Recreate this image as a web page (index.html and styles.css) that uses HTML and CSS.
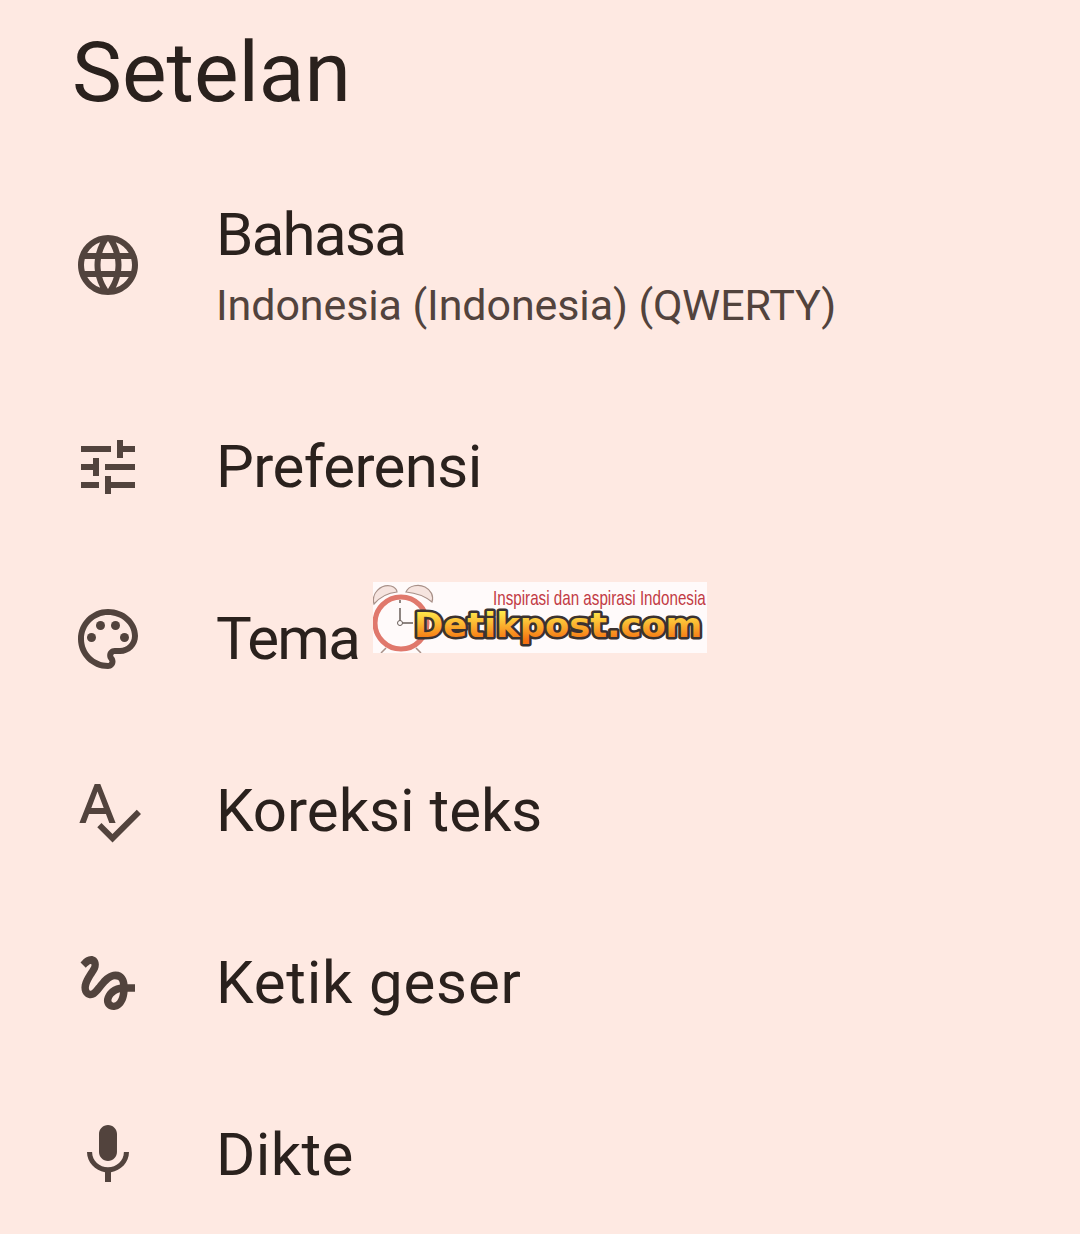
FILE: index.html
```html
<!DOCTYPE html>
<html>

<head>
    <meta charset="utf-8">
    <title>Setelan</title>
    <link rel="stylesheet" href="styles.css">
</head>

<body>
    <main class="page">
        <h1 class="title">Setelan</h1>
        <ul class="menu">
            <li class="row row-tall">
                <svg class="icon" viewBox="0 0 24 24"><path d="M11.99 2C6.47 2 2 6.48 2 12s4.47 10 9.99 10C17.52 22 22 17.52 22 12S17.52 2 11.99 2zm6.93 6h-2.95c-.32-1.25-.78-2.45-1.38-3.56 1.84.63 3.37 1.91 4.33 3.56zM12 4.04c.83 1.2 1.48 2.53 1.91 3.96h-3.82c.43-1.43 1.08-2.76 1.91-3.96zM4.26 14C4.1 13.36 4 12.69 4 12s.1-1.36.26-2h3.38c-.08.66-.14 1.32-.14 2 0 .68.06 1.34.14 2H4.26zm.82 2h2.95c.32 1.25.78 2.45 1.38 3.56-1.84-.63-3.37-1.9-4.33-3.56zm2.95-8H5.08c.96-1.66 2.49-2.93 4.33-3.56C8.81 5.55 8.35 6.75 8.03 8zM12 19.96c-.83-1.2-1.48-2.53-1.91-3.96h3.82c-.43 1.43-1.08 2.76-1.91 3.96zM14.34 14H9.66c-.09-.66-.16-1.32-.16-2 0-.68.07-1.35.16-2h4.68c.09.65.16 1.32.16 2 0 .68-.07 1.34-.16 2zm.25 5.56c.6-1.11 1.06-2.31 1.38-3.56h2.95c-.96 1.65-2.49 2.93-4.33 3.56zM16.36 14c.08-.66.14-1.32.14-2 0-.68-.06-1.34-.14-2h3.38c.16.64.26 1.31.26 2s-.1 1.36-.26 2h-3.38z"/></svg>
                <div class="labels">
                    <span class="label label-tight">Bahasa</span>
                    <span class="sublabel">Indonesia (Indonesia) (QWERTY)</span>
                </div>
            </li>
            <li class="row">
                <svg class="icon" viewBox="0 0 24 24"><path d="M3 17v2h6v-2H3zM3 5v2h10V5H3zm10 16v-2h8v-2h-8v-2h-2v6h2zM7 9v2H3v2h4v2h2V9H7zm14 4v-2H11v2h10zm-6-4h2V7h4V5h-4V3h-2v6z"/></svg>
                <span class="label label-snug">Preferensi</span>
            </li>
            <li class="row">
                <svg class="icon" viewBox="0 0 24 24">
                    <path d="M12 22C6.49 22 2 17.51 2 12S6.49 2 12 2s10 4.04 10 9c0 3.31-2.69 6-6 6h-1.77c-.28 0-.5.22-.5.5 0 .12.05.23.13.33.41.47.64 1.06.64 1.67 0 1.38-1.12 2.5-2.5 2.5zm0-18c-4.41 0-8 3.59-8 8s3.59 8 8 8c.28 0 .5-.22.5-.5 0-.16-.08-.28-.14-.35-.41-.46-.63-1.05-.63-1.65 0-1.38 1.12-2.5 2.5-2.5H16c2.21 0 4-1.79 4-4 0-3.86-3.59-7-8-7z"/>
                    <circle cx="6.5" cy="11.5" r="1.5"/>
                    <circle cx="9.5" cy="7.5" r="1.5"/>
                    <circle cx="14.5" cy="7.5" r="1.5"/>
                    <circle cx="17.5" cy="11.5" r="1.5"/>
                </svg>
                <span class="label label-tight">Tema</span>
            </li>
            <li class="row">
                <svg class="icon" viewBox="0 0 24 24"><path d="M12.45 16h2.09L9.43 3H7.57L2.46 16h2.09l1.12-3h5.64l1.14 3zm-6.02-5L8.5 5.48 10.57 11H6.43zm15.16.59l-8.09 8.09L9.83 16l-1.41 1.41 5.09 5.09L23 13l-1.41-1.41z"/></svg>
                <span class="label">Koreksi teks</span>
            </li>
            <li class="row">
                <svg class="icon" viewBox="0 0 24 24"><path d="M4.59 6.89c.7-.71 1.4-1.35 1.71-1.22.5.2 0 1.03-.3 1.52-.25.42-2.86 3.89-2.86 6.31 0 1.28.48 2.34 1.34 2.98.75.56 1.74.73 2.64.46 1.07-.31 1.95-1.4 3.06-2.77 1.21-1.49 2.83-3.44 4.08-3.44 1.63 0 1.65 1.01 1.76 1.79-3.78.64-5.38 3.67-5.38 5.37 0 1.7 1.44 3.09 3.21 3.09 1.63 0 4.29-1.33 4.69-6.1H21v-2.5h-2.47c-.15-1.65-1.09-4.2-4.03-4.2-2.25 0-4.18 1.91-4.94 2.84-.58.73-2.06 2.48-2.29 2.72-.25.3-.68.84-1.11.84-.45 0-.72-.83-.36-1.92.35-1.09 1.4-2.86 1.85-3.52.78-1.14 1.3-1.92 1.3-3.28C8.95 3.69 7.31 3 6.44 3 5.12 3 3.97 4 3.72 4.25c-.36.36-.66.66-.88.93l1.75 1.71zm9.29 11.66c-.31 0-.74-.26-.74-.72 0-.6.73-2.2 2.87-2.76-.3 2.69-1.43 3.48-2.13 3.48z"/></svg>
                <span class="label label-wide">Ketik geser</span>
            </li>
            <li class="row">
                <svg class="icon" viewBox="0 0 24 24"><path d="M12 14c1.66 0 2.99-1.34 2.99-3L15 5c0-1.66-1.34-3-3-3S9 3.34 9 5v6c0 1.66 1.34 3 3 3zm5.3-3c0 3-2.54 5.1-5.3 5.1S6.7 14 6.7 11H5c0 3.41 2.72 6.23 6 6.72V21h2v-3.28c3.28-.48 6-3.3 6-6.72h-1.7z"/></svg>
                <span class="label label-dikte">Dikte</span>
            </li>
        </ul>

        <!-- watermark pasted over the screenshot -->
        <svg class="watermark" viewBox="0 0 334 71">
            <defs>
                <linearGradient id="logo-fill" x1="0" y1="0" x2="0" y2="1">
                    <stop offset="0.15" stop-color="#ffe84a"/>
                    <stop offset="0.9" stop-color="#f5700f"/>
                </linearGradient>
            </defs>
            <path class="bell" d="M1 22C-2 11 8 2 18 4 22 5 24 8 24 10 14 11 7 15 1 22z"/>
            <path class="bell" d="M33 10C36 3 46 2 52 5 58 8 61 14 59 20 53 15 44 11 33 10z"/>
            <path class="clock-foot" d="M13 66l-5 5M43 66l5 5"/>
            <circle class="clock-ring" cx="28" cy="41" r="26"/>
            <path class="clock-hand" d="M27 26v15h13M27 18v3"/>
            <circle class="clock-pin" cx="27" cy="41" r="2.5"/>
            <text class="logo-tagline" transform="translate(120 23) scale(.76 1)">Inspirasi dan aspirasi Indonesia</text>
            <text class="logo-name" transform="translate(41 55) scale(1.07 1)">Detikpost.com</text>
        </svg>
    </main>
</body>

</html>
```

FILE: styles.css
```css
html {
    background-color: #fee9e2;
    font-family: Roboto, sans-serif;
    color: #2a211d;
}

body {
    margin: 0;
}

.page {
    position: relative;
    height: 1234px;
    overflow: hidden;
}

.title {
    height: 149px;
    margin: 0;
    padding: 26px 0 0 72px;
    box-sizing: border-box;
    font-size: 84px;
    font-weight: 400;
    line-height: 94px;
}

.menu {
    list-style: none;
    margin: 0;
    padding: 0 0 0 72px;
}

.row {
    display: flex;
    align-items: center;
    gap: 72px;
    height: 172px;
}

.row-tall {
    height: 232px;
}

.icon {
    flex: none;
    width: 72px;
    height: 72px;
    fill: #52433d;
}

.labels {
    display: flex;
    flex-direction: column;
    gap: 9px;
}

.label {
    font-size: 60px;
    line-height: 70px;
}

/* roboto runs a bit different from the screenshot's font */
.label-tight {
    letter-spacing: -1.7px;
}

.label-snug {
    letter-spacing: -0.6px;
}

.label-wide {
    letter-spacing: 0.8px;
}

.label-dikte {
    letter-spacing: 0.4px;
}

.sublabel {
    font-size: 43px;
    line-height: 52px;
    letter-spacing: -0.1px;
    color: #52433d;
}

.watermark {
    position: absolute;
    left: 373px;
    top: 582px;
    width: 334px;
    height: 71px;
    background: #fffafa;
}

.bell {
    fill: #f6e4df;
    stroke: #a89088;
    stroke-width: 1.2;
}

.clock-foot {
    fill: none;
    stroke: #a89088;
    stroke-width: 1.5;
}

.clock-ring {
    fill: #fffafa;
    stroke: #e0786c;
    stroke-width: 5;
}

.clock-hand {
    fill: none;
    stroke: #6a5f5a;
    stroke-width: 1.5;
}

.clock-pin {
    fill: #fffafa;
    stroke: #6a5f5a;
}

.logo-tagline {
    font-family: "Liberation Sans", sans-serif;
    font-size: 20px;
    fill: #c23a44;
}

.logo-name {
    font-family: "DejaVu Sans", sans-serif;
    font-size: 33px;
    font-weight: 700;
    fill: url(#logo-fill);
    stroke: #3a3230;
    stroke-width: 5px;
    stroke-linejoin: round;
    paint-order: stroke;
}
```
